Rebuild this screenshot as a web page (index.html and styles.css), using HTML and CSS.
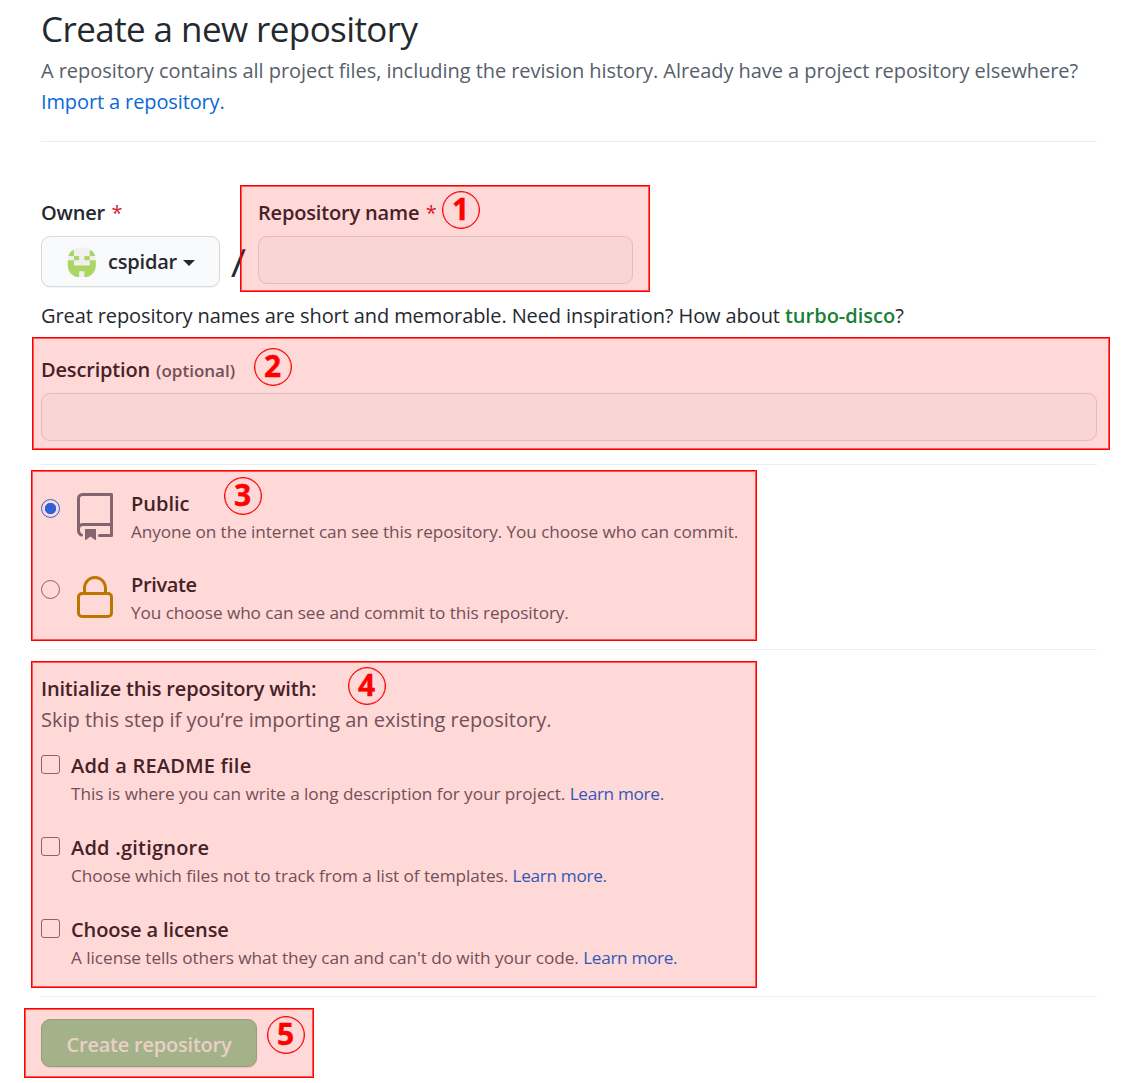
FILE: index.html
```html
<!DOCTYPE html>
<html lang="en">
<head>
<meta charset="utf-8">
<title>Create a new repository</title>
<link rel="stylesheet" href="styles.css">
</head>
<body>
<main class="page">
  <header class="head">
    <h1 class="title">Create a new repository</h1>
    <p class="lead">A repository contains all project files, including the revision history. Already have a project repository elsewhere?<br><a class="link import" href="#">Import a repository.</a></p>
  </header>
  <hr class="rule">

  <form class="form">
    <div class="name-row">
      <div class="field">
        <div class="label">Owner <span class="req">*</span></div>
        <button class="owner" type="button">
          <svg class="avatar" viewBox="0 0 30 30" aria-hidden="true">
            <clipPath id="round"><rect x=".8" y=".5" width="28" height="30" rx="12"/></clipPath>
            <g clip-path="url(#round)">
              <rect width="30" height="31" fill="#f0f0f0"/>
              <path fill="#acd664" d="M0 3.5h7V9H0zM22.7 3.5H30V9h-7.3zM7 9h5.2v4.3H7zM17.4 9h5.3v4.3h-5.3zM0 13.3h7v5.2h15.7v-5.2H30V31H17.4v-6.8h-5.2V31H0z"/>
            </g>
          </svg>
          <span class="owner-name">cspidar</span><span class="caret"></span>
        </button>
      </div>
      <span class="slash">/</span>
      <div class="field">
        <div class="label">Repository name <span class="req">*</span></div>
        <input class="input input-name" type="text" aria-label="Repository name">
      </div>
    </div>
    <p class="hint">Great repository names are short and memorable. Need inspiration? How about <b class="suggest">turbo-disco</b>?</p>

    <div class="description">
      <div class="label">Description <span class="optional">(optional)</span></div>
      <input class="input" type="text" aria-label="Description">
    </div>
    <hr class="rule">

    <div class="visibility">
      <label class="option">
        <span class="radio radio-on"></span>
        <svg class="icon icon-repo" viewBox="0 0 24 24" aria-hidden="true"><path fill-rule="evenodd" d="M3 2.75A2.75 2.75 0 015.75 0h14.5a.75.75 0 01.75.75v20.5a.75.75 0 01-.75.75h-6a.75.75 0 010-1.5h5.25v-4H6A1.5 1.5 0 004.5 18v.75c0 .716.43 1.334 1.05 1.605a.75.75 0 01-.6 1.374A3.25 3.25 0 013 18.75v-16zM19.5 1.5V15H6c-.546 0-1.059.146-1.5.401V2.75c0-.69.56-1.25 1.25-1.25H19.5z"/><path d="M7 18.25a.25.25 0 01.25-.25h5a.25.25 0 01.25.25v5.01a.25.25 0 01-.397.201l-2.206-1.604a.25.25 0 00-.294 0L7.397 23.46a.25.25 0 01-.397-.2v-5.01z"/></svg>
        <span class="option-text"><span class="name">Public</span><span class="note">Anyone on the internet can see this repository. You choose who can commit.</span></span>
      </label>
      <label class="option">
        <span class="radio"></span>
        <svg class="icon icon-lock" viewBox="0 0 24 24" aria-hidden="true"><path fill-rule="evenodd" d="M6 9V7.25C6 3.845 8.503 1 12 1s6 2.845 6 6.25V9h.5a2.5 2.5 0 012.5 2.5v8a2.5 2.5 0 01-2.5 2.5h-13A2.5 2.5 0 013 19.5v-8A2.5 2.5 0 015.5 9H6zm1.5-1.75C7.5 4.58 9.422 2.5 12 2.5c2.578 0 4.5 2.08 4.5 4.75V9h-9V7.25zm-3 4.25a1 1 0 011-1h13a1 1 0 011 1v8a1 1 0 01-1 1h-13a1 1 0 01-1-1v-8z"/></svg>
        <span class="option-text"><span class="name name-private">Private</span><span class="note">You choose who can see and commit to this repository.</span></span>
      </label>
    </div>
    <hr class="rule">

    <div class="init">
      <h2 class="init-title">Initialize this repository with:</h2>
      <p class="init-sub">Skip this step if you’re importing an existing repository.</p>
      <div class="checks">
        <label class="check"><span class="box"></span><span class="option-text"><span class="name name-wide">Add a README file</span><span class="note note-check">This is where you can write a long description for your project. <a class="link more" href="#">Learn more.</a></span></span></label>
        <label class="check"><span class="box"></span><span class="option-text"><span class="name name-wide">Add .gitignore</span><span class="note note-check">Choose which files not to track from a list of templates. <a class="link more" href="#">Learn more.</a></span></span></label>
        <label class="check"><span class="box"></span><span class="option-text"><span class="name name-tight">Choose a license</span><span class="note note-check">A license tells others what they can and can't do with your code. <a class="link more" href="#">Learn more.</a></span></span></label>
      </div>
    </div>
    <hr class="rule">
    <button class="submit" type="button">Create repository</button>
  </form>

  <div class="mark mark-1"><span class="num">1</span></div>
  <div class="mark mark-2"><span class="num">2</span></div>
  <div class="mark mark-3"><span class="num">3</span></div>
  <div class="mark mark-4"><span class="num">4</span></div>
  <div class="mark mark-5"><span class="num">5</span></div>
</main>
</body>
</html>
```
FILE: styles.css
```css
* { box-sizing: border-box; }
body {
  margin: 0;
  background: #fff;
  color: #24292f;
  font: 400 20px/31px "Open Sans", "Noto Sans", sans-serif;
}
h1, h2, p { margin: 0; font-weight: 400; }
.page {
  position: relative;
  width: 1146px;
  height: 1083px;
  padding: 5px 49px 0 41px;
  overflow: hidden;
}
.title { margin-bottom: 2px; font-size: 35px; line-height: 48px; letter-spacing: -.58px; }
.lead { color: #57606a; letter-spacing: -.058px; white-space: nowrap; }
.link { color: #0969da; text-decoration: none; }
.import { letter-spacing: -.12px; }
.rule { height: 1px; margin: 23px 0; border: 0; background: #eaecef; }
.head + .rule { margin: 24px 0 56px; }

.label, .name { font-weight: 600; white-space: nowrap; }
.label { margin-bottom: 8px; line-height: 30px; letter-spacing: -.17px; }
.name { line-height: 32px; }
.name-private { letter-spacing: -.36px; }
.name-wide { letter-spacing: .22px; }
.name-tight { letter-spacing: -.12px; }
.req { margin-left: 1.5px; color: #cf222e; font-weight: 400; }
.optional { margin-left: 1px; color: #57606a; font-size: 17px; letter-spacing: 0; }
.name-row { display: flex; height: 89px; }
.owner {
  display: flex;
  align-items: center;
  width: 179px;
  height: 51px;
  padding: 0 0 0 25px;
  border: 1px solid #d6d8da;
  border-radius: 9px;
  background: #f9fafc;
  box-shadow: 0 1px 1px rgba(27, 31, 36, .05);
  color: #24292f;
  font: 600 20px/30px "Open Sans", "Noto Sans", sans-serif;
}
.owner-name { letter-spacing: -.2px; }
.avatar { width: 30px; height: 30px; margin-right: 11px; }
.caret {
  margin: 2px 0 0 6px;
  border: 6px solid transparent;
  border-top-color: #24292f;
  border-bottom: 0;
}
.slash {
  width: 38px;
  padding: 49px 0 0 12px;
  font-size: 39px;
  line-height: 30px;
  transform: skewX(-2deg);
}
.input {
  display: block;
  width: 100%;
  height: 48px;
  border: 1px solid #dcdfe3;
  border-radius: 9px;
  background: #f9fcfc;
}
.input-name { width: 375px; }
.hint { margin: 13px 0 24px; letter-spacing: -.1px; white-space: nowrap; }
.suggest { color: #1a7f37; font-weight: 600; letter-spacing: 0; }
.description .label { margin-bottom: 7px; }

.visibility { display: flex; flex-direction: column; gap: 24px; }
.option, .check { display: flex; height: 57px; }
.radio {
  width: 19px;
  height: 19px;
  margin: 11px 11px 0 0;
  border: 1px solid #767676;
  border-radius: 50%;
}
.radio-on {
  border-color: #0675ff;
  background: radial-gradient(circle, #0675ff 5.3px, transparent 6px);
}
.icon { width: 48px; height: 48px; margin: 5px 12px 0 0; }
.icon-repo { fill: #6e7781; }
.icon-lock { fill: #b08c00; }
.option-text { display: flex; flex-direction: column; }
.note {
  color: #57606a;
  font-size: 17.2px;
  line-height: 23px;
  letter-spacing: -.075px;
  white-space: nowrap;
}
.note-check { letter-spacing: -.042px; }
.more { letter-spacing: -.32px; }

.init-title { font-size: 20px; font-weight: 600; letter-spacing: -.17px; }
.init-sub { margin-bottom: 15px; color: #57606a; }
.checks { display: flex; flex-direction: column; gap: 25px; }
.box {
  width: 19px;
  height: 19px;
  margin: 5px 11px 0 0;
  border: 1px solid #767676;
  border-radius: 3px;
}
.init + .rule { margin: 25px 0 22px; }
.submit {
  display: block;
  width: 216px;
  height: 48px;
  padding: 4px 0 0;
  border: 1px solid #80bd8f;
  border-radius: 9px;
  background: #94d3a2;
  box-shadow: 0 1px 1px rgba(27, 31, 36, .12);
  color: rgba(255, 255, 255, .8);
  font: 600 20px/30px "Open Sans", "Noto Sans", sans-serif;
  letter-spacing: -.22px;
}

/* numbered callouts over the form */
.mark {
  position: absolute;
  border: 1px solid #f00;
  background: rgba(255, 0, 0, .153);
  box-shadow: inset 0 0 0 1px rgba(255, 0, 0, .6);
}
.num {
  position: absolute;
  width: 38px;
  height: 38px;
  padding-right: 1px;
  border: 1px solid #f00;
  border-radius: 50%;
  box-shadow: inset 0 0 0 .3px #f00;
  color: #f00;
  font: 700 30px/34px "Open Sans", "Noto Sans", sans-serif;
  -webkit-text-stroke: .4px #f00;
  text-align: center;
}
.mark-1 { left: 240px; top: 185px; width: 410px; height: 107px; }
.mark-1 .num { left: 201px; top: 5px; }
.mark-2 { left: 32px; top: 337px; width: 1078px; height: 113px; }
.mark-2 .num { left: 221px; top: 10px; }
.mark-3 { left: 31px; top: 470px; width: 726px; height: 171px; }
.mark-3 .num { left: 192px; top: 6px; }
.mark-4 { left: 31px; top: 661px; width: 726px; height: 327px; }
.mark-4 .num { left: 316px; top: 5px; }
.mark-5 { left: 24px; top: 1008px; width: 290px; height: 70px; }
.mark-5 .num { left: 242px; top: 7px; }
```
